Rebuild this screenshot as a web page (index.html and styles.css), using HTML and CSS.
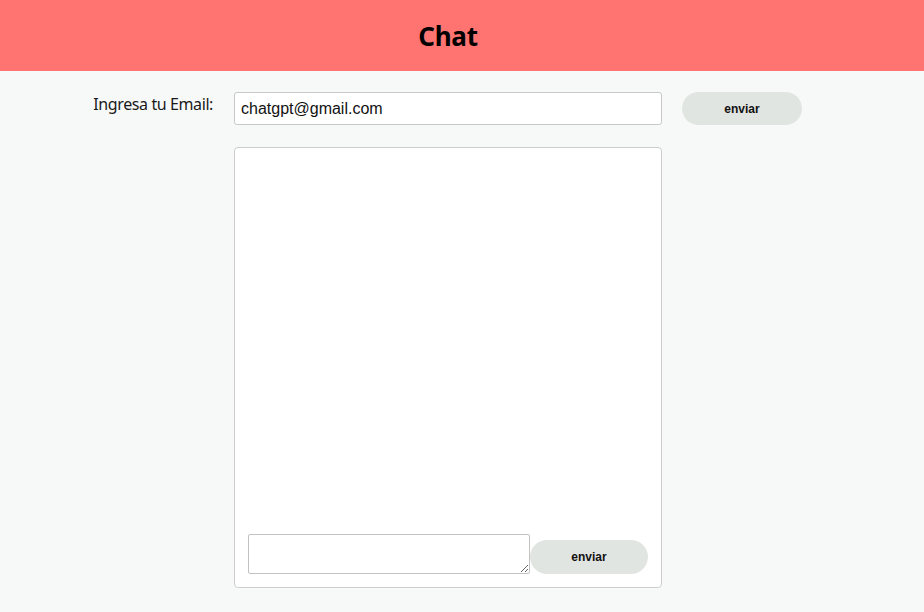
FILE: index.html
```html
<!DOCTYPE html>
<html lang="es">
<head>
<meta charset="utf-8">
<title>Chat</title>
<link rel="stylesheet" href="styles.css">
</head>
<body>
<header class="top">
  <h1 class="title">Chat</h1>
</header>
<main class="main">
  <div class="email-row">
    <label class="email-label" for="email">Ingresa tu Email:</label>
    <input class="email-input" id="email" type="text" value="chatgpt@gmail.com">
    <button class="btn btn-email">enviar</button>
  </div>
  <section class="chat">
    <div class="messages"></div>
    <div class="compose">
      <textarea class="msg-input"></textarea>
      <button class="btn btn-send">enviar</button>
    </div>
  </section>
</main>
</body>
</html>
```
FILE: styles.css
```css
* { box-sizing: border-box; }
html, body { margin: 0; padding: 0; }
body {
  background: #f7f9f8;
  font-family: "Noto Sans", "Open Sans", sans-serif;
  color: #111;
}
.top {
  background: #ff7470;
  height: 71px;
  display: flex;
  align-items: center;
  justify-content: center;
  padding-right: 28px;
}
.title {
  margin: 0;
  font-family: "Noto Sans", sans-serif;
  font-size: 26px;
  font-weight: 700;
  color: #000;
  line-height: 1;
  letter-spacing: -0.3px;
}
.main {
  padding-top: 21px;
}
.email-row {
  display: flex;
  align-items: flex-start;
}
.email-label {
  width: 213px;
  text-align: right;
  font-size: 16px;
  line-height: 22px;
  padding-top: 1px;
  letter-spacing: -0.4px;
  color: #1a1a1a;
}
.email-input {
  margin-left: 21px;
  width: 428px;
  height: 33px;
  border: 1px solid #c8c8c8;
  border-radius: 3px;
  background: #fff;
  padding: 0 6px;
  font-family: "Liberation Sans", Arial, sans-serif;
  font-size: 16px;
  color: #111;
}
.btn {
  border: none;
  background: #e1e5e2;
  font-family: "Liberation Sans", Arial, sans-serif;
  font-weight: 700;
  color: #111;
  border-radius: 17px;
}
.btn-email {
  margin-left: 20px;
  width: 120px;
  height: 33px;
  font-size: 12px;
}
.chat {
  margin: 22px 0 0 234px;
  width: 428px;
  height: 441px;
  background: #fff;
  border: 1px solid #cdcdcd;
  border-radius: 4px;
  display: flex;
  flex-direction: column;
  padding: 0 13px 13px 13px;
}
.messages { flex: 1; }
.compose {
  display: flex;
  align-items: flex-end;
}
.msg-input {
  width: 282px;
  height: 40px;
  border: 1px solid #c2c2c2;
  border-radius: 2px;
  resize: vertical;
  margin: 0;
  display: block;
}
.btn-send {
  width: 118px;
  height: 34px;
  font-size: 12px;
}
```
